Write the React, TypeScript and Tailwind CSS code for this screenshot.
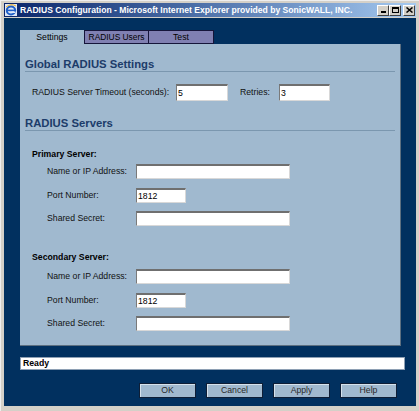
import React from "react";

const F = { fontFamily: '"Liberation Sans", Arial, sans-serif' };

function Input({ w, value }: { w: string; value?: string }) {
  return (
    <div
      className={`${w} h-[15px] bg-white border-t-2 border-l border-b border-r border-t-[#6f6f6f] border-l-[#7a7a7a] border-b-[#d8d8d8] border-r-[#d8d8d8] flex items-center pl-[1px] text-[8.7px] text-black leading-none`}
    >
      {value}
    </div>
  );
}

function Row({ label, w, value, mt }: { label: string; w: string; value?: string; mt: string }) {
  return (
    <div className={`${mt} h-[15px] flex items-center pl-[22px]`}>
      <span className="w-[89px] text-[8.7px] text-[#111] leading-none">{label}</span>
      <Input w={w} value={value} />
    </div>
  );
}

function Btn({ label }: { label: string }) {
  return (
    <div className="w-[57px] h-[15px] bg-[#a0b9cf] border border-[#0e1e36] shadow-[inset_1px_1px_0_#d6e2ec] flex items-center justify-center text-[8.7px] text-[#2a2a2a] leading-none">
      {label}
    </div>
  );
}

export default function App() {
  return (
    <div style={F} className="w-[419px] h-[411px] bg-[#d4d0c8] flex flex-col pt-[2px] px-[3px] pb-[5px] border-l border-t border-l-[#eeeeee] border-t-[#eeeeee] overflow-hidden">
      {/* title bar */}
      <div className="h-[14px] flex items-center bg-gradient-to-r from-[#0a246a] to-[#a6caf0] pl-[1px] pr-[1px]">
        <svg width="12" height="12" viewBox="0 0 12 12" className="shrink-0">
          <rect x="0" y="0" width="12" height="12" fill="#dfe8f8" />
          <ellipse cx="6" cy="6.5" rx="4.2" ry="4" fill="none" stroke="#1f5fc8" strokeWidth="2" />
          <rect x="2" y="5.6" width="8" height="1.6" fill="#1f5fc8" />
          <rect x="6.5" y="7.5" width="4" height="1.5" fill="#dfe8f8" />
          <path d="M1 3 Q6 -1 11 2" stroke="#f0b020" strokeWidth="1" fill="none" />
        </svg>
        <span className="ml-[3px] text-white font-bold text-[8.6px] leading-none whitespace-nowrap">
          RADIUS Configuration - Microsoft Internet Explorer provided by SonicWALL, INC.
        </span>
        <div className="ml-auto flex items-center">
          <div className="w-[12px] h-[11px] bg-[#d4d0c8] border border-t-white border-l-white border-b-[#404040] border-r-[#404040] flex items-end justify-center pb-[2px]">
            <div className="w-[5px] h-[2px] bg-black" />
          </div>
          <div className="w-[12px] h-[11px] bg-[#d4d0c8] border border-t-white border-l-white border-b-[#404040] border-r-[#404040] flex items-center justify-center">
            <div className="w-[7px] h-[6px] border border-black border-t-2" />
          </div>
          <div className="ml-[2px] w-[12px] h-[11px] bg-[#d4d0c8] border border-t-white border-l-white border-b-[#404040] border-r-[#404040] flex items-center justify-center">
            <svg width="7" height="6" viewBox="0 0 7 6">
              <path d="M0.5 0.5 L6.5 5.5 M6.5 0.5 L0.5 5.5" stroke="black" strokeWidth="1.5" />
            </svg>
          </div>
        </div>
      </div>

      {/* client */}
      <div className="mt-[1px] flex-1 bg-[#01305f] pt-[12px] pl-[16px] flex flex-col">
        {/* tabs */}
        <div className="flex h-[14px]">
          <div className="w-[64px] h-[14px] bg-[#a0b9cf] flex items-center justify-center text-[8.7px] text-black leading-none">
            Settings
          </div>
          <div className="w-[65px] h-[14px] bg-[#8080b2] border border-[#15153a] flex items-center justify-center text-[8.4px] text-black leading-none whitespace-nowrap">
            RADIUS Users
          </div>
          <div className="w-[65px] h-[14px] bg-[#8080b2] border border-l-0 border-[#15153a] flex items-center justify-center text-[8.7px] text-black leading-none">
            Test
          </div>
        </div>

        {/* panel */}
        <div className="w-[381px] h-[302px] bg-[#a0b9cf] border-r border-b border-r-[#5d6f80] border-b-[#5d6f80] px-[5px]">
          <div className="pt-[14px] border-b border-[#7b97af] text-[11.3px] leading-[13px] font-bold text-[#1c3c6a]">
            Global RADIUS Settings
          </div>
          <div className="mt-[12px] h-[17px] flex items-center pl-[7px]">
            <span className="w-[144px] text-[8.7px] text-[#111] leading-none">RADIUS Server Timeout (seconds):</span>
            <Input w="w-[52px] h-[17px]" value="5" />
            <span className="ml-[12px] w-[39px] text-[8.7px] text-[#111] leading-none">Retries:</span>
            <Input w="w-[51px] h-[17px]" value="3" />
          </div>
          <div className="pt-[16px] border-b border-[#7b97af] text-[11.3px] leading-[13px] font-bold text-[#1c3c6a]">
            RADIUS Servers
          </div>

          <div className="mt-[17px] h-[13px] flex items-center pl-[7px] text-[8.7px] font-bold text-black leading-none">
            Primary Server:
          </div>
          <Row mt="mt-[3px]" label="Name or IP Address:" w="w-[154px]" />
          <Row mt="mt-[9px]" label="Port Number:" w="w-[50px]" value="1812" />
          <Row mt="mt-[8px]" label="Shared Secret:" w="w-[154px]" />

          <div className="mt-[25px] h-[13px] flex items-center pl-[7px] text-[8.7px] font-bold text-black leading-none">
            Secondary Server:
          </div>
          <Row mt="mt-[5px]" label="Name or IP Address:" w="w-[154px]" />
          <Row mt="mt-[9px]" label="Port Number:" w="w-[50px]" value="1812" />
          <Row mt="mt-[8px]" label="Shared Secret:" w="w-[154px]" />
        </div>

        {/* status */}
        <div className="mt-[11px] w-[385px] h-[13px] bg-white border border-[#8ea0b4] flex items-center pl-[2px] text-[8.7px] font-bold text-black leading-none">
          Ready
        </div>

        {/* buttons */}
        <div className="mt-[13px] flex gap-[10px] pl-[119px]">
          <Btn label="OK" />
          <Btn label="Cancel" />
          <Btn label="Apply" />
          <Btn label="Help" />
        </div>
      </div>
    </div>
  );
}
